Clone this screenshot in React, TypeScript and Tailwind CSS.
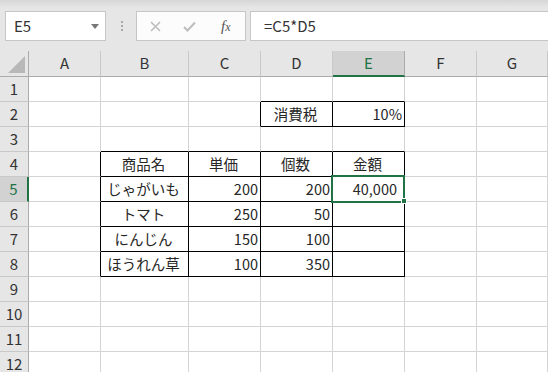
const COLS = ["A", "B", "C", "D", "E", "F", "G"];
const ROWS = [1, 2, 3, 4, 5, 6, 7, 8, 9, 10, 11, 12];

type Cell = { v: string; align: "center" | "right" };

// セルの中身 (列番号1=A, 行番号)
const cells: Record<string, Cell> = {
  "4-2": { v: "消費税", align: "center" },
  "5-2": { v: "10%", align: "right" },
  "2-4": { v: "商品名", align: "center" },
  "3-4": { v: "単価", align: "center" },
  "4-4": { v: "個数", align: "center" },
  "5-4": { v: "金額", align: "center" },
  "2-5": { v: "じゃがいも", align: "center" },
  "3-5": { v: "200", align: "right" },
  "4-5": { v: "200", align: "right" },
  "5-5": { v: "40,000", align: "right" },
  "2-6": { v: "トマト", align: "center" },
  "3-6": { v: "250", align: "right" },
  "4-6": { v: "50", align: "right" },
  "2-7": { v: "にんじん", align: "center" },
  "3-7": { v: "150", align: "right" },
  "4-7": { v: "100", align: "right" },
  "2-8": { v: "ほうれん草", align: "center" },
  "3-8": { v: "100", align: "right" },
  "4-8": { v: "350", align: "right" },
};

// 罫線の範囲 B4:E8 と D2:E2
const inBox = (c: number, r: number) =>
  (c >= 2 && c <= 5 && r >= 4 && r <= 8) || (c >= 4 && c <= 5 && r === 2);

const FormulaBar = () => (
  <div className="h-[51px] flex items-start bg-gradient-to-b from-[#d6d6d6] via-[#e6e6e6] via-[15%] to-[#e6e6e6]">
    <div className="mt-[11px] ml-[5px] w-[101px] h-[30px] bg-white border border-[#c6c6c6] flex items-center pl-[8px] pr-[6px]">
      <span className="text-[15px] text-[#333]">E5</span>
      <svg width="8" height="5" viewBox="0 0 8 5" className="ml-auto">
        <path d="M0 0 L8 0 L4 5 Z" fill="#777" />
      </svg>
    </div>
    <div className="mt-[21px] ml-[15px] flex flex-col gap-[2px]">
      <span className="w-[2px] h-[2px] bg-[#a8a8a8]" />
      <span className="w-[2px] h-[2px] bg-[#a8a8a8]" />
      <span className="w-[2px] h-[2px] bg-[#a8a8a8]" />
    </div>
    <div className="mt-[11px] ml-[13px] w-[110px] h-[30px] bg-[#fcfcfc] border border-[#c6c6c6] flex items-center">
      <svg width="11" height="11" viewBox="0 0 11 11" className="ml-[13px]">
        <path d="M1 1 L10 10 M10 1 L1 10" stroke="#bdbdbd" strokeWidth="1.6" />
      </svg>
      <svg width="13" height="11" viewBox="0 0 13 11" className="ml-[22px]">
        <path d="M1 6 L4.5 9.5 L12 1.5" stroke="#bdbdbd" strokeWidth="2" fill="none" />
      </svg>
      <span className="ml-[25px] font-['Liberation_Serif',serif] italic text-[15px] text-[#555] leading-none">
        f<span className="text-[12px]">x</span>
      </span>
    </div>
    <div className="mt-[11px] ml-[4px] flex-1 h-[30px] bg-white border border-[#c6c6c6] border-r-0 flex items-center pl-[13px]">
      <span className="text-[15px] text-[#333]">=C5*D5</span>
    </div>
  </div>
);

export default function App() {
  return (
    <div className="w-[548px] h-[372px] overflow-hidden bg-white font-['Noto_Sans_CJK_JP','Noto_Sans',sans-serif]">
      <FormulaBar />
      <div className="grid grid-cols-[29px_72px_88px_72px_72px_72px_72px_71px] grid-rows-[26px] auto-rows-[25px]">
        {/* 左上の角 */}
        <div className="bg-[#e6e6e6] border-r border-b border-r-[#ababab] border-b-[#ababab] flex items-end justify-end pr-[3px] pb-[3px]">
          <svg width="17" height="17" viewBox="0 0 17 17">
            <path d="M17 0 L17 17 L0 17 Z" fill="#b8b8b8" />
          </svg>
        </div>
        {COLS.map((c) =>
          c === "E" ? (
            <div
              key={c}
              className="bg-[#d2d2d2] border-r border-r-[#ababab] border-b-2 border-b-[#217346] flex items-center justify-center text-[15px] text-[#217346]"
            >
              {c}
            </div>
          ) : (
            <div
              key={c}
              className="bg-[#e6e6e6] border-r border-b border-r-[#c8c8c8] border-b-[#ababab] flex items-center justify-center text-[15px] text-[#333]"
            >
              {c}
            </div>
          )
        )}
        {ROWS.map((r) => (
          <div key={r} className="contents">
            {r === 5 ? (
              <div className="bg-[#d2d2d2] border-r-2 border-b border-r-[#217346] border-b-[#c8c8c8] flex items-center justify-center text-[15px] text-[#217346]">
                {r}
              </div>
            ) : (
              <div className="bg-[#e6e6e6] border-r border-b border-r-[#ababab] border-b-[#c8c8c8] flex items-center justify-center text-[15px] text-[#333]">
                {r}
              </div>
            )}
            {COLS.map((_, i) => {
              const c = i + 1;
              const cell = cells[`${c}-${r}`];
              const rightBlack = inBox(c, r) || inBox(c + 1, r);
              const bottomBlack = inBox(c, r) || inBox(c, r + 1);
              const selected = c === 5 && r === 5;
              return (
                <div
                  key={c}
                  className={[
                    "relative border-r border-b flex items-center text-[14.5px] text-[#262626] whitespace-nowrap",
                    rightBlack ? "border-r-black" : "border-r-[#d4d4d4]",
                    bottomBlack ? "border-b-black" : "border-b-[#d4d4d4]",
                    cell?.align === "right" ? "justify-end" : "justify-center",
                    selected ? "pr-[7px]" : "pr-[2px]",
                  ].join(" ")}
                >
                  {cell?.v}
                  {selected && (
                    <>
                      <div className="absolute z-10 left-[-2px] top-[-2px] w-[74px] h-[28px] border-2 border-[#217346]" />
                      <div className="absolute z-10 left-[68px] top-[21px] w-[6px] h-[6px] bg-[#217346] border border-white" />
                    </>
                  )}
                </div>
              );
            })}
          </div>
        ))}
      </div>
    </div>
  );
}
